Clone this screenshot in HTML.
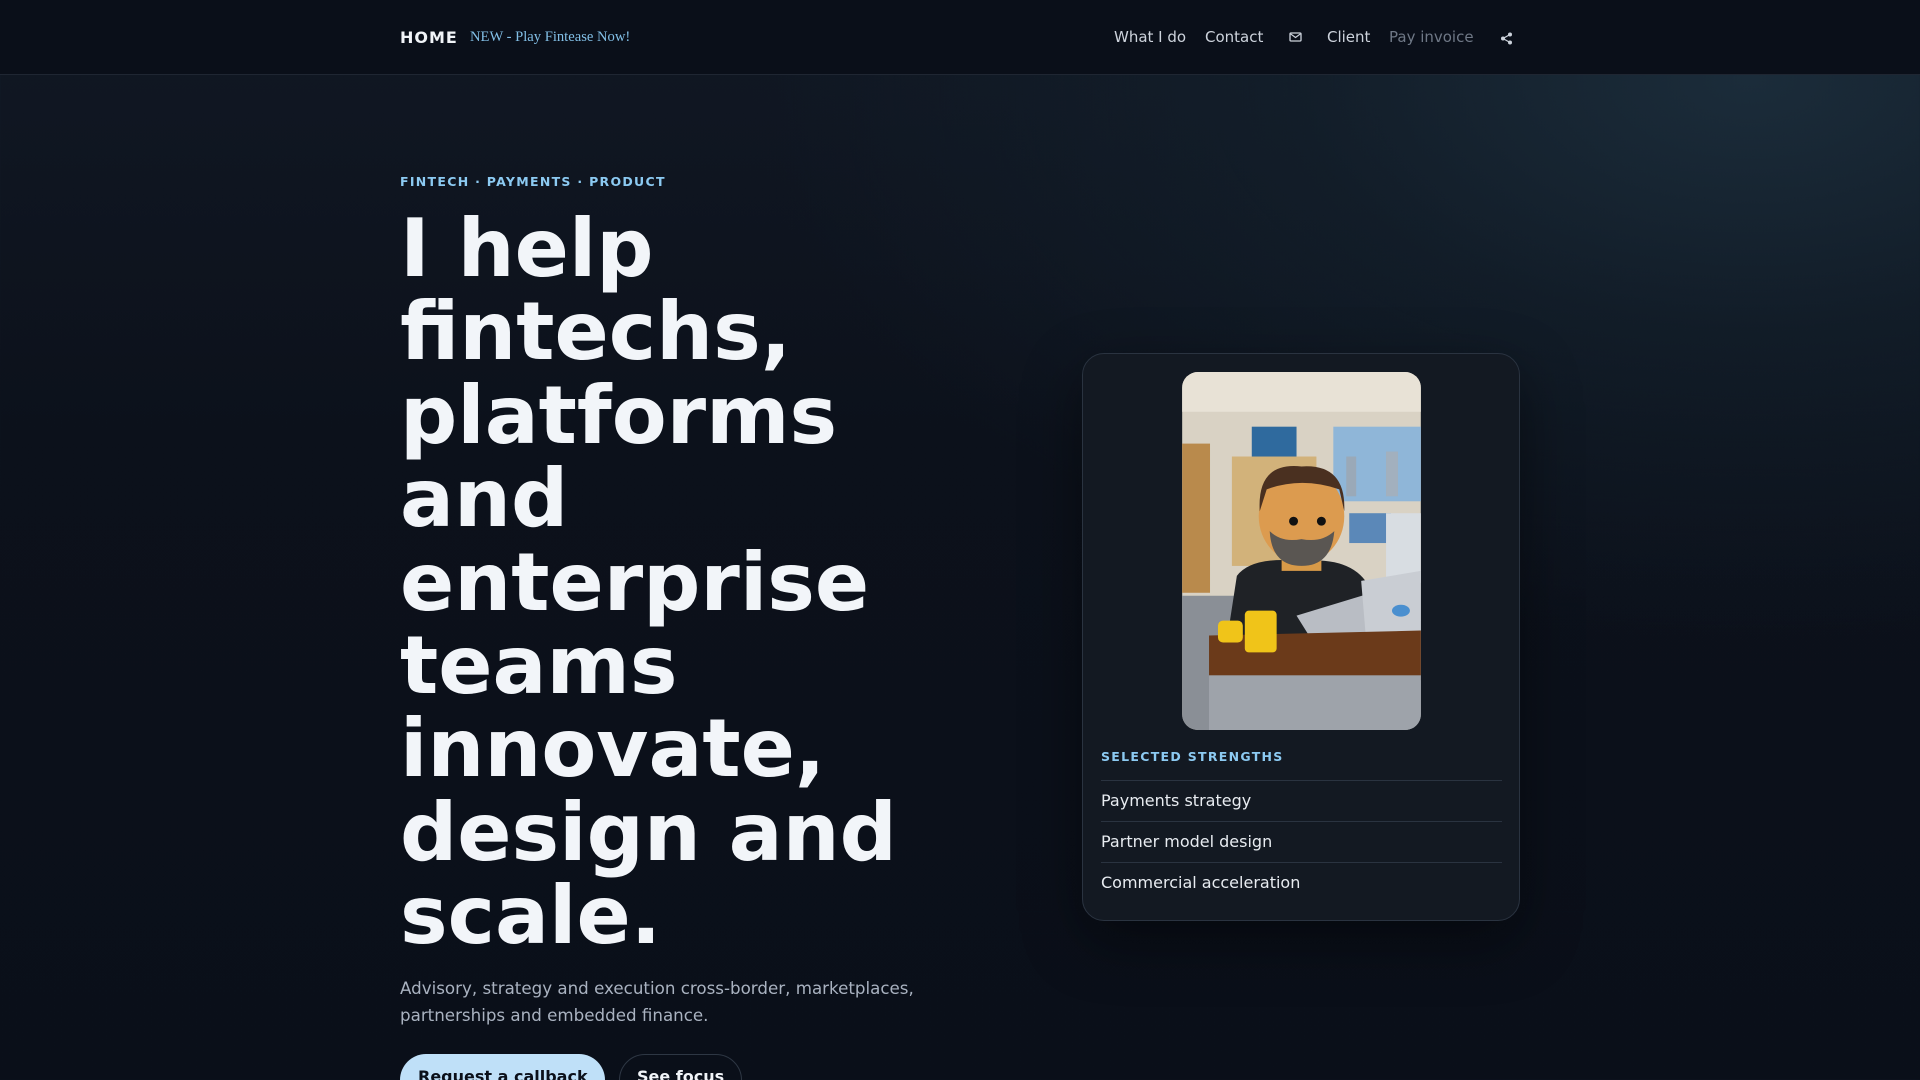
<!DOCTYPE html>
<html><head><meta charset="utf-8"><style>
*{margin:0;padding:0;box-sizing:border-box}
html{width:1920px;height:1080px;overflow:hidden}
body{width:1920px;height:1080px;overflow:hidden;font-family:"DejaVu Sans","Liberation Sans",sans-serif;color:#f1f4f8;
background:radial-gradient(ellipse 1000px 560px at 1750px 80px,#1b2c3a 0%,rgba(20,34,46,.6) 45%,rgba(11,16,26,0) 100%),linear-gradient(180deg,#111824 0%,#0c111b 40%,#0a0f19 100%);position:relative}
nav{position:absolute;top:0;left:0;width:1920px;height:75px;background:#0a0f19;border-bottom:1px solid #1f2632}
.home{position:absolute;left:400px;top:28px;font-weight:bold;font-size:16px;letter-spacing:1px;color:#f1f4f8}
.new{position:absolute;left:470px;top:29px;font-family:"Liberation Serif",serif;font-size:14.6px;color:#82bfe6}
.nl{position:absolute;top:28px;font-size:15px;color:#cdd3dc}
.eyebrow{position:absolute;left:400px;top:174px;font-size:12.5px;font-weight:bold;letter-spacing:1.3px;color:#8ccaf2}
h1{position:absolute;left:400px;top:207px;font-size:80px;line-height:83.4px;font-weight:bold;color:#f2f5f9;width:560px}
p.sub{position:absolute;left:400px;top:975px;width:540px;font-size:16.7px;line-height:27px;color:#a9b2c0}
.b1{position:absolute;left:400px;top:1054px;width:205px;height:52px;border-radius:26px;background:#bfe0f8;color:#0b101a;font-weight:bold;font-size:16px;padding:13px 0 0 18px}
.b2{position:absolute;left:619px;top:1054px;width:123px;height:52px;border-radius:26px;border:1px solid #2e3744;color:#f1f4f8;font-weight:bold;font-size:16px;padding:12px 0 0 17px}
.card{position:absolute;left:1082px;top:353px;width:438px;height:568px;border-radius:22px;background:#131922;border:1px solid #2a3340;box-shadow:0 20px 60px rgba(0,0,0,.45)}
.img{position:absolute;left:99px;top:18px;width:239px;height:358px;border-radius:16px;overflow:hidden}
.st{position:absolute;left:18px;top:395px;font-size:12.5px;font-weight:bold;letter-spacing:1.3px;color:#8ccaf2}
.li{position:absolute;left:18px;width:401px;height:41px;border-top:1px solid #2a3340;font-size:16px;color:#e8ecf1;padding-top:10px}
</style></head><body>
<nav>
<div class="home">HOME</div>
<div class="new">NEW - Play Fintease Now!</div>
<div class="nl" style="left:1114px">What I do</div>
<div class="nl" style="left:1205px">Contact</div>
<svg style="position:absolute;left:1289px;top:32px" width="13" height="10" viewBox="0 0 13 10"><rect x="1" y="1" width="11" height="8" rx="1" fill="none" stroke="#cdd3dc" stroke-width="1.3"/><path d="M1.5 1.8 6.5 5.5 11.5 1.8" fill="none" stroke="#cdd3dc" stroke-width="1.2"/></svg>
<div class="nl" style="left:1327px">Client</div>
<div class="nl" style="left:1389px;color:#6f7886">Pay invoice</div>
<svg style="position:absolute;left:1500px;top:32px" width="13" height="13" viewBox="0 0 13 13"><circle cx="10" cy="2.5" r="2" fill="#cdd3dc"/><circle cx="3" cy="6.5" r="2" fill="#cdd3dc"/><circle cx="10" cy="10.5" r="2" fill="#cdd3dc"/><path d="M10 2.5 3 6.5 10 10.5" stroke="#cdd3dc" stroke-width="1.2" fill="none"/></svg>
</nav>
<div class="eyebrow">FINTECH · PAYMENTS · PRODUCT</div>
<h1>I help fintechs, platforms and enterprise teams innovate, design and scale.</h1>
<p class="sub">Advisory, strategy and execution cross-border, marketplaces, partnerships and embedded finance.</p>
<div class="b1">Request a callback</div>
<div class="b2">See focus</div>
<div class="card">
<div class="img"><svg width="239" height="358" viewBox="0 0 240 360">
<rect width="240" height="360" fill="#d9d2c4"/>
<rect width="240" height="40" fill="#e8e2d6"/>
<rect x="0" y="72" width="28" height="150" fill="#b98a4c"/>
<rect x="152" y="55" width="88" height="75" fill="#8fb6d8"/>
<rect x="165" y="85" width="10" height="40" fill="#9aa9b8"/><rect x="205" y="80" width="12" height="45" fill="#a2b0be"/>
<rect x="50" y="85" width="85" height="110" fill="#d2b27a"/>
<rect x="70" y="55" width="45" height="30" fill="#2f6a9e"/>
<rect x="168" y="142" width="42" height="30" fill="#5b88b8"/>
<rect x="205" y="142" width="35" height="70" fill="#d8dde2"/>
<rect x="0" y="225" width="240" height="135" fill="#8a8f96"/>
<path d="M55 205 Q70 185 120 190 Q175 185 190 220 L195 270 L45 270 Z" fill="#1f2226"/>
<rect x="100" y="180" width="40" height="20" fill="#d89a48"/>
<ellipse cx="120" cy="145" rx="43" ry="47" fill="#dc9b4f"/>
<path d="M78 140 Q75 90 120 95 Q165 92 163 140 L158 118 Q120 105 85 118 Z" fill="#4a3020"/>
<path d="M88 160 Q90 195 120 195 Q150 195 153 160 Q140 172 120 168 Q100 172 88 160Z" fill="#5a5652"/>
<circle cx="112" cy="150" r="4.5" fill="#111"/><circle cx="140" cy="150" r="4.5" fill="#111"/>
<path d="M115 245 L230 210 L240 250 L140 285 Z" fill="#b9bdc4"/>
<path d="M180 210 L240 200 L240 260 L185 270 Z" fill="#c9cdd3"/>
<ellipse cx="220" cy="240" rx="9" ry="6" fill="#4a8fcf"/>
<path d="M27 265 L240 260 L240 310 L27 310 Z" fill="#6b3a1a"/>
<rect x="27" y="305" width="213" height="55" fill="#9ea3aa"/>
<rect x="63" y="240" width="32" height="42" rx="4" fill="#f0c419"/>
<rect x="36" y="250" width="25" height="22" rx="5" fill="#f0c419"/>
</svg></div>
<div class="st">SELECTED STRENGTHS</div>
<div class="li" style="top:426px">Payments strategy</div>
<div class="li" style="top:467px">Partner model design</div>
<div class="li" style="top:508px">Commercial acceleration</div>
</div>
</body></html>
